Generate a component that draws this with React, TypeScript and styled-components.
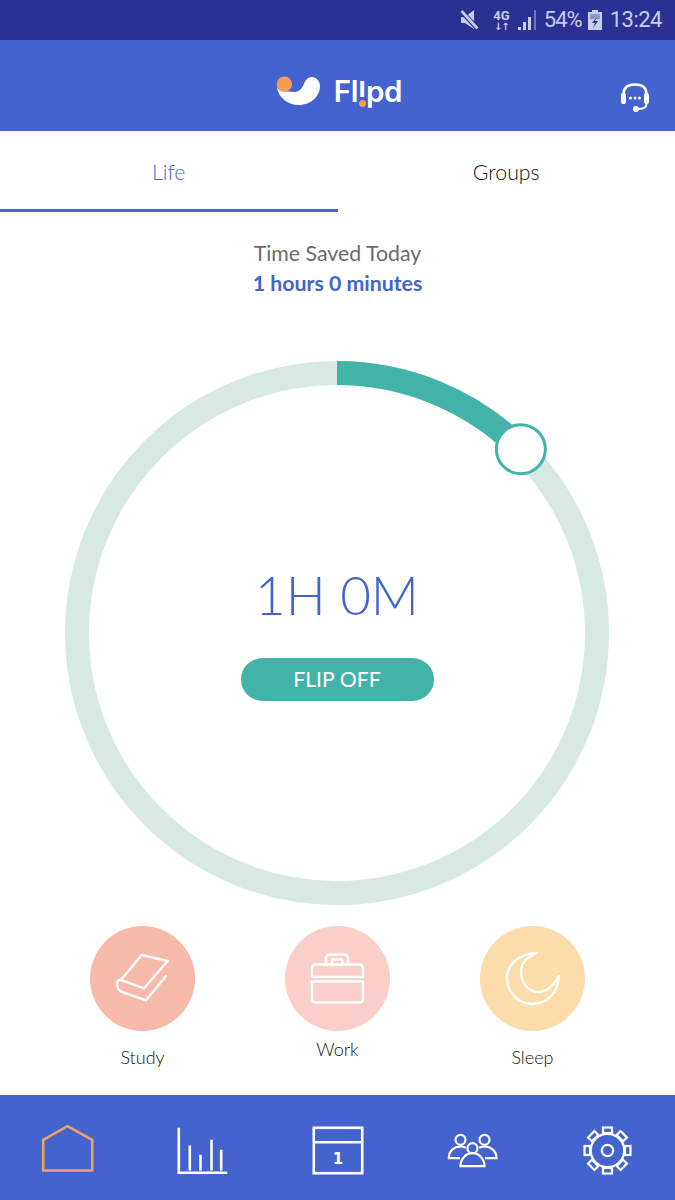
import React from 'react';
import styled, { createGlobalStyle } from 'styled-components';

const BLUE = '#4463cf';
const TEAL = '#43b3a9';

const GlobalStyle = createGlobalStyle`
  html, body {
    margin: 0;
    padding: 0;
    background: #fff;
  }
  * {
    box-sizing: border-box;
  }
`;

const Page = styled.div`
  width: 675px;
  height: 1200px;
  display: flex;
  flex-direction: column;
  overflow: hidden;
  background: #fff;
  font-family: Lato, 'Liberation Sans', sans-serif;
`;

// status bar
const StatusBar = styled.div`
  height: 40px;
  flex: none;
  display: flex;
  align-items: center;
  justify-content: flex-end;
  padding-right: 13px;
  background: #2b3192;
  color: #c9cdec;
  font-family: Roboto, sans-serif;
  font-size: 22px;
  letter-spacing: -0.5px;
`;

const StatusText = styled.span<{ $left: number; $tight?: boolean }>`
  margin-left: ${(p) => p.$left}px;
  line-height: 40px;
  letter-spacing: ${(p) => (p.$tight ? '-1px' : '-0.5px')};
`;

const StatusIcon = styled.svg<{ $left: number }>`
  margin-left: ${(p) => p.$left}px;
  display: block;
  flex: none;
`;

const NetworkBadge = styled.div`
  width: 17px;
  margin-left: 14px;
  display: flex;
  flex-direction: column;
  align-items: center;
  font-size: 13px;
  font-weight: 700;
  line-height: 12px;
  letter-spacing: 0;
`;

const NetworkArrows = styled.span`
  font-family: 'DejaVu Sans', sans-serif;
  font-size: 10px;
  line-height: 9px;
  letter-spacing: -1px;
`;

// header
const Header = styled.header`
  height: 91px;
  flex: none;
  display: grid;
  grid-template-columns: 1fr auto 1fr;
  align-items: center;
  background: ${BLUE};
`;

const Logo = styled.div`
  grid-column: 2;
  display: flex;
  align-items: center;
  gap: 7px;
  margin-left: -2px;
  margin-top: 10px;
`;

const LogoText = styled.span`
  font-family: Inter, sans-serif;
  font-size: 29.5px;
  font-weight: 600;
  color: #fff;
  letter-spacing: -0.2px;
`;

const LogoStem = styled.span`
  position: relative;
  display: inline-block;
  transform: translateY(-5px);

  &::after {
    content: '';
    position: absolute;
    left: 50%;
    bottom: 0;
    width: 7px;
    height: 7px;
    margin-left: -3.5px;
    transform: translateY(3px);
    border-radius: 50%;
    background: #f79b4e;
  }
`;

const SupportButton = styled.div`
  justify-self: end;
  margin-right: 23px;
  margin-top: 24px;
  height: 34px;
`;

// tabs
const Tabs = styled.nav`
  height: 81px;
  flex: none;
  display: flex;
`;

const Tab = styled.div<{ $active?: boolean }>`
  flex: 1;
  display: flex;
  align-items: center;
  justify-content: center;
  padding-top: 4px;
  font-size: 21.3px;
  font-weight: 300;
  color: ${(p) => (p.$active ? BLUE : '#111')};
  border-bottom: 3px solid ${(p) => (p.$active ? BLUE : 'transparent')};
`;

// summary
const Summary = styled.div`
  flex: none;
  padding-top: 26px;
  text-align: center;
  font-size: 21.3px;
  line-height: 30px;
`;

const SummaryLabel = styled.div`
  color: #6b6b6b;
`;

const SummaryValue = styled.div`
  color: ${BLUE};
  font-weight: 700;
`;

// ring
const RingWrap = styled.div`
  width: 544px;
  height: 544px;
  flex: none;
  margin: 63px 0 0 65px;
  display: grid;
`;

const RingSvg = styled.svg`
  grid-area: 1 / 1;
  display: block;
`;

const RingCenter = styled.div`
  grid-area: 1 / 1;
  z-index: 1;
  display: flex;
  flex-direction: column;
  align-items: center;
  justify-content: center;
  gap: 33px;
  padding-bottom: 1px;
`;

const Countdown = styled.div`
  font-size: 53px;
  font-weight: 300;
  line-height: 60px;
  color: ${BLUE};
`;

const FlipButton = styled.button`
  width: 193px;
  height: 43px;
  padding: 0;
  border: none;
  border-radius: 22px;
  background: ${TEAL};
  color: #fff;
  font-family: inherit;
  font-size: 21.3px;
`;

// categories
const Categories = styled.div`
  flex: none;
  margin-top: 21px;
  display: flex;
  justify-content: center;
  align-items: flex-start;
`;

const Category = styled.div`
  width: 195px;
  display: flex;
  flex-direction: column;
  align-items: center;
`;

const CategoryCircle = styled.div<{ $color: string }>`
  width: 105px;
  height: 105px;
  border-radius: 50%;
  background: ${(p) => p.$color};
`;

const CategoryLabel = styled.div<{ $gap: number }>`
  margin-top: ${(p) => p.$gap}px;
  font-size: 18px;
  font-weight: 300;
  line-height: 26px;
  color: #111;
`;

// bottom nav
const BottomNav = styled.nav`
  height: 105px;
  flex: none;
  margin-top: auto;
  display: grid;
  grid-template-columns: repeat(5, 1fr);
  align-items: center;
  justify-items: center;
  background: ${BLUE};
`;

const NavIcon = styled.svg<{ $color?: string; $stroke?: number }>`
  display: block;
  fill: none;
  stroke: ${(p) => p.$color ?? '#fff'};
  stroke-width: ${(p) => p.$stroke ?? 2.6};
`;

const CalendarDay = styled.text`
  font-family: 'DejaVu Sans', sans-serif;
  font-size: 15px;
  font-weight: 700;
  fill: #fff;
  stroke: none;
  text-anchor: middle;
`;

const CategoryIcon = styled.svg`
  display: block;
  fill: none;
  stroke: #fff;
  stroke-width: 2.4;
  stroke-linejoin: round;
  stroke-linecap: round;
`;

const categories = [
  {
    label: 'Study',
    color: '#f7b9a9',
    gap: 13,
    icon: (
      <path d="M51.7 29 L77.7 35 L54 62.3 L31 54 Z M31 54 Q26 54 27.3 60 Q28 64 31 65.5 L56 74.3 L76 50" />
    ),
  },
  {
    label: 'Work',
    color: '#fbcfc9',
    gap: 5,
    icon: (
      <>
        <path d="M41 38.5 V33 Q41 28.5 45 28.5 H59 Q63 28.5 63 33 V38.5" />
        <rect x="47" y="33.5" width="10.5" height="5" rx="1" />
        <path d="M27 51 V42.5 Q27 38.5 31 38.5 H74 Q78 38.5 78 42.5 V51 Z" />
        <path d="M27 55.5 H78 V72.5 Q78 76.5 74 76.5 H31 Q27 76.5 27 72.5 Z" />
      </>
    ),
  },
  {
    label: 'Sleep',
    color: '#fbdcaa',
    gap: 13,
    icon: (
      <path d="M57 27 C38 28 27 39 27 52 C27 67 39 78 52 78 C67 78 78 67 79 50 C74 60 66 66 58 66 C48 66 41 56 41 46 C41 38 47 31 57 27 Z" />
    ),
  },
];

const gearTeeth = [0, 45, 90, 135, 180, 225, 270, 315];

const App: React.FC = () => {
  return (
    <Page>
      <GlobalStyle />
      <StatusBar>
        <StatusIcon $left={0} width="19" height="20" viewBox="0 0 19 20" fill="#c9cdec">
          <path d="M1 7 H5 L14 0 V19 L5 13 H1 Z" />
          <path d="M1 1 L18 19" stroke="#2b3192" strokeWidth="5" />
          <path d="M1.5 1 L17.5 18.5" stroke="#c9cdec" strokeWidth="2.6" />
        </StatusIcon>
        <NetworkBadge>
          4G
          <NetworkArrows>↓↑</NetworkArrows>
        </NetworkBadge>
        <StatusIcon $left={8} width="20" height="22" viewBox="0 0 20 22" fill="#c9cdec">
          <rect x="0" y="18" width="3" height="3" />
          <rect x="5" y="13" width="3" height="8" />
          <rect x="10" y="8" width="3" height="13" />
          <rect x="16" y="1" width="2" height="20" opacity="0.45" />
        </StatusIcon>
        <StatusText $left={6} $tight>54%</StatusText>
        <StatusIcon $left={6} width="14" height="20" viewBox="0 0 14 20" fill="#c9cdec">
          <path d="M4 0 H10 V2 H14 V20 H0 V2 H4 Z" />
          <path d="M2 4 H12 V9 H2 Z" fill="#8f95cf" />
          <path d="M9 7 L4 13 H7 L5 18 L10 11 H7 Z" fill="#2b3192" />
        </StatusIcon>
        <StatusText $left={8}>13:24</StatusText>
      </StatusBar>

      <Header>
        <Logo>
          <svg width="56" height="42" viewBox="0 0 56 42">
            <path
              d="M6 18 C8 28 17 35 28 35 C40 35 49 26 49 16 C49 11 45 7 41 7 C36 7 34 11 32 16 C30 20 27 22 23 22 C18 22 14 21 10 20 Z"
              fill="#fff"
            />
            <circle cx="13.3" cy="14.3" r="7.7" fill="#f79b4e" />
          </svg>
          <LogoText>
            Fl<LogoStem>ı</LogoStem>pd
          </LogoText>
        </Logo>
        <SupportButton>
          <svg width="34" height="34" viewBox="0 0 34 34" fill="none" stroke="#fff">
            <path d="M5.5 13 C5.5 6.5 10 3.5 17 3.5 C24 3.5 28.5 6.5 28.5 13" strokeWidth="2.4" />
            <rect x="3" y="12" width="5" height="11" rx="2" fill="#fff" stroke="none" />
            <rect x="26" y="12" width="5" height="11" rx="2" fill="#fff" stroke="none" />
            <circle cx="12.5" cy="17" r="1.5" fill="#fff" stroke="none" />
            <circle cx="17" cy="17" r="1.5" fill="#fff" stroke="none" />
            <circle cx="21.5" cy="17" r="1.5" fill="#fff" stroke="none" />
            <path d="M28.5 23 C28.5 26 26 28 20 28" strokeWidth="1.8" />
            <circle cx="18" cy="28" r="3" fill="#fff" stroke="none" />
          </svg>
        </SupportButton>
      </Header>

      <Tabs>
        <Tab $active>Life</Tab>
        <Tab>Groups</Tab>
      </Tabs>

      <Summary>
        <SummaryLabel>Time Saved Today</SummaryLabel>
        <SummaryValue>1 hours 0 minutes</SummaryValue>
      </Summary>

      <RingWrap>
        <RingSvg width="544" height="544" viewBox="0 0 544 544" fill="none">
          <circle cx="272" cy="272" r="260" stroke="#d8e9e4" strokeWidth="24" />
          <path d="M272 12 A260 260 0 0 1 455.85 88.15" stroke={TEAL} strokeWidth="24" />
          <circle cx="455.85" cy="88.15" r="24.5" fill="#fff" stroke={TEAL} strokeWidth="3" />
        </RingSvg>
        <RingCenter>
          <Countdown>1H 0M</Countdown>
          <FlipButton>FLIP OFF</FlipButton>
        </RingCenter>
      </RingWrap>

      <Categories>
        {categories.map((c) => (
          <Category key={c.label}>
            <CategoryCircle $color={c.color}>
              <CategoryIcon width="105" height="105" viewBox="0 0 105 105">
                {c.icon}
              </CategoryIcon>
            </CategoryCircle>
            <CategoryLabel $gap={c.gap}>{c.label}</CategoryLabel>
          </Category>
        ))}
      </Categories>

      <BottomNav>
        <NavIcon width="60" height="60" viewBox="0 0 60 60" $color="#eda365">
          <path d="M5.2 21.8 L29.5 8.2 L54.2 21.8 V52.5 H5.2 Z" />
        </NavIcon>
        <NavIcon width="60" height="60" viewBox="0 0 60 60">
          <path d="M5.8 9.8 V54.8 H54.2" />
          <path d="M16.8 27.5 V52.5 M27.5 36.8 V52.5 M38.5 21.8 V52.5 M48.2 31.8 V52.5" strokeWidth="2.6" />
        </NavIcon>
        <NavIcon width="60" height="60" viewBox="0 0 60 60">
          <rect x="5.8" y="9.8" width="48.4" height="45.4" />
          <path d="M5.8 24.2 H54.2" />
          <CalendarDay x="30" y="46">1</CalendarDay>
        </NavIcon>
        <NavIcon width="60" height="60" viewBox="0 0 60 60" $stroke={2.2}>
          <circle cx="17.5" cy="21.8" r="5" />
          <circle cx="41.5" cy="21.8" r="5" />
          <circle cx="29.5" cy="30.2" r="5" />
          <path d="M17 40.2 H5.8 C5.8 33 11 28.5 17.5 28.5 C19.5 28.5 21 29 22.8 29.8" />
          <path d="M42 40.2 H53.5 C53.5 33 48 28.5 41.5 28.5 C39.5 28.5 38 29 36.2 29.8" />
          <path d="M17.5 48.2 C17.5 41 23 35.2 29.5 35.2 C36 35.2 41.5 41 41.5 48.2 Z" />
        </NavIcon>
        <NavIcon width="60" height="60" viewBox="0 0 60 60" $stroke={2.2}>
          <circle cx="29.5" cy="32.5" r="16.7" />
          <circle cx="29.5" cy="32.5" r="5.7" />
          {gearTeeth.map((deg) => (
            <rect key={deg} x="25" y="9.5" width="9" height="5.5" transform={`rotate(${deg} 29.5 32.5)`} />
          ))}
        </NavIcon>
      </BottomNav>
    </Page>
  );
};

export default App;
